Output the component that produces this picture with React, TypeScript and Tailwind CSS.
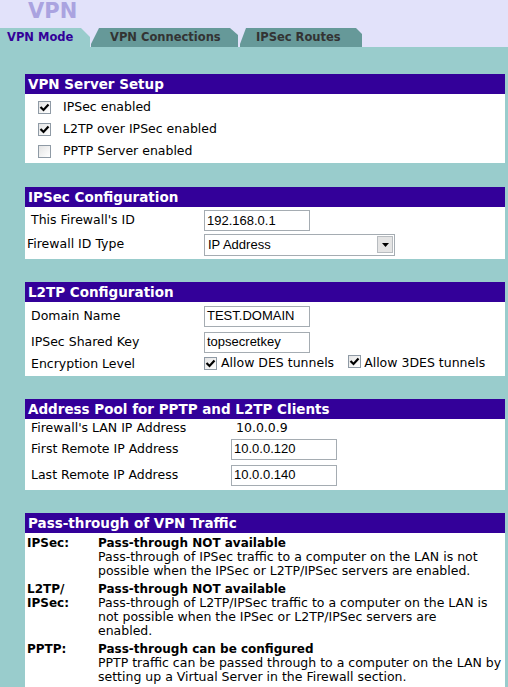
import React from "react";

function Check({ on }: { on: boolean }) {
  return (
    <span className="inline-flex w-[13px] h-[13px] shrink-0 border border-[#8f9aa5] bg-gradient-to-br from-[#e4e4e4] to-white">
      {on && (
        <svg width="11" height="11" viewBox="0 0 11 11">
          <polyline points="1.5,5 4.5,8 9.5,2.5" fill="none" stroke="#000" strokeWidth="2.2" />
        </svg>
      )}
    </span>
  );
}

function TextBox({ value, width }: { value: string; width: string }) {
  return (
    <div className={`${width} h-[21px] border border-[#a5acb2] bg-white pl-[2px] flex items-center font-['Liberation_Sans',Arial,sans-serif] text-[13px] text-black`}>
      {value}
    </div>
  );
}

function Section({ title, children, className }: { title: string; children: React.ReactNode; className?: string }) {
  return (
    <div className={className}>
      <div className="h-[20px] bg-[#330099] text-white font-bold text-[13.5px] leading-[20px] pl-[3px]">{title}</div>
      <div className="bg-white">{children}</div>
    </div>
  );
}

function Row({ label, children, pad = "pl-[6px]", labelW = "w-[173px]", h = "h-[26px]" }: { label: string; children?: React.ReactNode; pad?: string; labelW?: string; h?: string }) {
  return (
    <div className={`flex items-center ${h} ${pad}`}>
      <span className={`${labelW} shrink-0`}>{label}</span>
      {children}
    </div>
  );
}

export default function App() {
  return (
    <div className="w-[508px] h-[687px] overflow-hidden font-['DejaVu_Sans',Verdana,sans-serif] text-[12.5px] text-black bg-[#99cccc]">
      <div className="bg-[#e2e2fa]">
        <div className="h-[28px] pl-[28px] pt-[1px] text-[21px] font-bold leading-[21px] text-[#aaa3e0]">VPN</div>
        <div className="flex h-[19px] font-bold text-[11.5px]">
          <div className="w-[90px] bg-[#99cccc] text-[#330099] pl-[7px] leading-[19px] [clip-path:polygon(0_0,81px_0,90px_9px,90px_100%,0_100%)]">
            VPN Mode
          </div>
          <div className="ml-[1px] w-[147px] bg-[#669999] text-[#333333] pl-[19px] leading-[19px] [clip-path:polygon(8px_0,139px_0,147px_7px,147px_100%,0_100%,0_16px)]">
            VPN Connections
          </div>
          <div className="ml-[2px] w-[122px] bg-[#669999] text-[#333333] pl-[16px] leading-[19px] [clip-path:polygon(6px_0,116px_0,122px_6px,122px_100%,0_100%,0_16px)]">
            IPSec Routes
          </div>
        </div>
      </div>

      <div className="pl-[25px] pr-[3px] pt-[27px]">
        <Section title="VPN Server Setup">
          <div className="pt-[2px] pb-[1px]">
            {[
              ["IPSec enabled", true],
              ["L2TP over IPSec enabled", true],
              ["PPTP Server enabled", false],
            ].map(([l, on]) => (
              <div key={l as string} className="flex items-center h-[22px] pl-[13px]">
                <Check on={on as boolean} />
                <span className="ml-[12px]">{l as string}</span>
              </div>
            ))}
          </div>
        </Section>

        <Section title="IPSec Configuration" className="mt-[24px]">
          <div className="pt-[2px] pb-[2px]">
            <Row label="This Firewall's ID" h="h-[23px]">
              <TextBox value="192.168.0.1" width="w-[106px]" />
            </Row>
            <Row label="Firewall ID Type" pad="pl-[2px]" labelW="w-[177px]" h="h-[25px]">
              <div className="w-[191px] h-[22px] border border-[#a5acb2] bg-white flex items-center justify-between pl-[3px] pr-[1px] font-['Liberation_Sans',Arial,sans-serif] text-[13px]">
                <span>IP Address</span>
                <span className="w-[16px] h-[17px] bg-[#e4e4e4] border border-[#b8bcc0] flex items-center justify-center">
                  <svg width="7" height="4" viewBox="0 0 7 4">
                    <polygon points="0,0 7,0 3.5,4" fill="#000" />
                  </svg>
                </span>
              </div>
            </Row>
          </div>
        </Section>

        <Section title="L2TP Configuration" className="mt-[23px]">
          <div className="pt-[1px] pb-[2px]">
            <Row label="Domain Name">
              <TextBox value="TEST.DOMAIN" width="w-[106px]" />
            </Row>
            <Row label="IPSec Shared Key">
              <TextBox value="topsecretkey" width="w-[106px]" />
            </Row>
            <Row label="Encryption Level" h="h-[19px]">
              <div className="flex items-center -mt-[2px]">
                <Check on={true} />
                <span className="ml-[4px]">Allow DES tunnels</span>
                <span className="ml-[14px]">
                  <Check on={true} />
                </span>
                <span className="ml-[3px]">Allow 3DES tunnels</span>
              </div>
            </Row>
          </div>
        </Section>

        <Section title="Address Pool for PPTP and L2TP Clients" className="mt-[23px]">
          <div className="pt-[1px] pb-[2px]">
            <Row label="Firewall's LAN IP Address" labelW="w-[205px]" h="h-[16px]">
              <span>10.0.0.9</span>
            </Row>
            <Row label="First Remote IP Address" labelW="w-[200px]">
              <TextBox value="10.0.0.120" width="w-[106px]" />
            </Row>
            <Row label="Last Remote IP Address" labelW="w-[200px]">
              <TextBox value="10.0.0.140" width="w-[106px]" />
            </Row>
          </div>
        </Section>

        <Section title="Pass-through of VPN Traffic" className="mt-[23px]">
          <div className="pl-[2px] pt-[3px] pb-[4px] text-[12.5px] leading-[14px] whitespace-nowrap">
            <div className="flex">
              <div className="w-[71px] font-bold text-[12px]">IPSec:</div>
              <div>
                <div className="font-bold text-[12px]">Pass-through NOT available</div>
                Pass-through of IPSec traffic to a computer on the LAN is not
                <br />
                possible when the IPSec or L2TP/IPSec servers are enabled.
              </div>
            </div>
            <div className="flex mt-[4px]">
              <div className="w-[71px] font-bold text-[12px]">
                L2TP/
                <br />
                IPSec:
              </div>
              <div>
                <div className="font-bold text-[12px]">Pass-through NOT available</div>
                Pass-through of L2TP/IPSec traffic to a computer on the LAN is
                <br />
                not possible when the IPSec or L2TP/IPSec servers are
                <br />
                enabled.
              </div>
            </div>
            <div className="flex mt-[4px]">
              <div className="w-[71px] font-bold text-[12px]">PPTP:</div>
              <div>
                <div className="font-bold text-[12px]">Pass-through can be configured</div>
                PPTP traffic can be passed through to a computer on the LAN by
                <br />
                setting up a Virtual Server in the Firewall section.
              </div>
            </div>
          </div>
        </Section>
      </div>
    </div>
  );
}
